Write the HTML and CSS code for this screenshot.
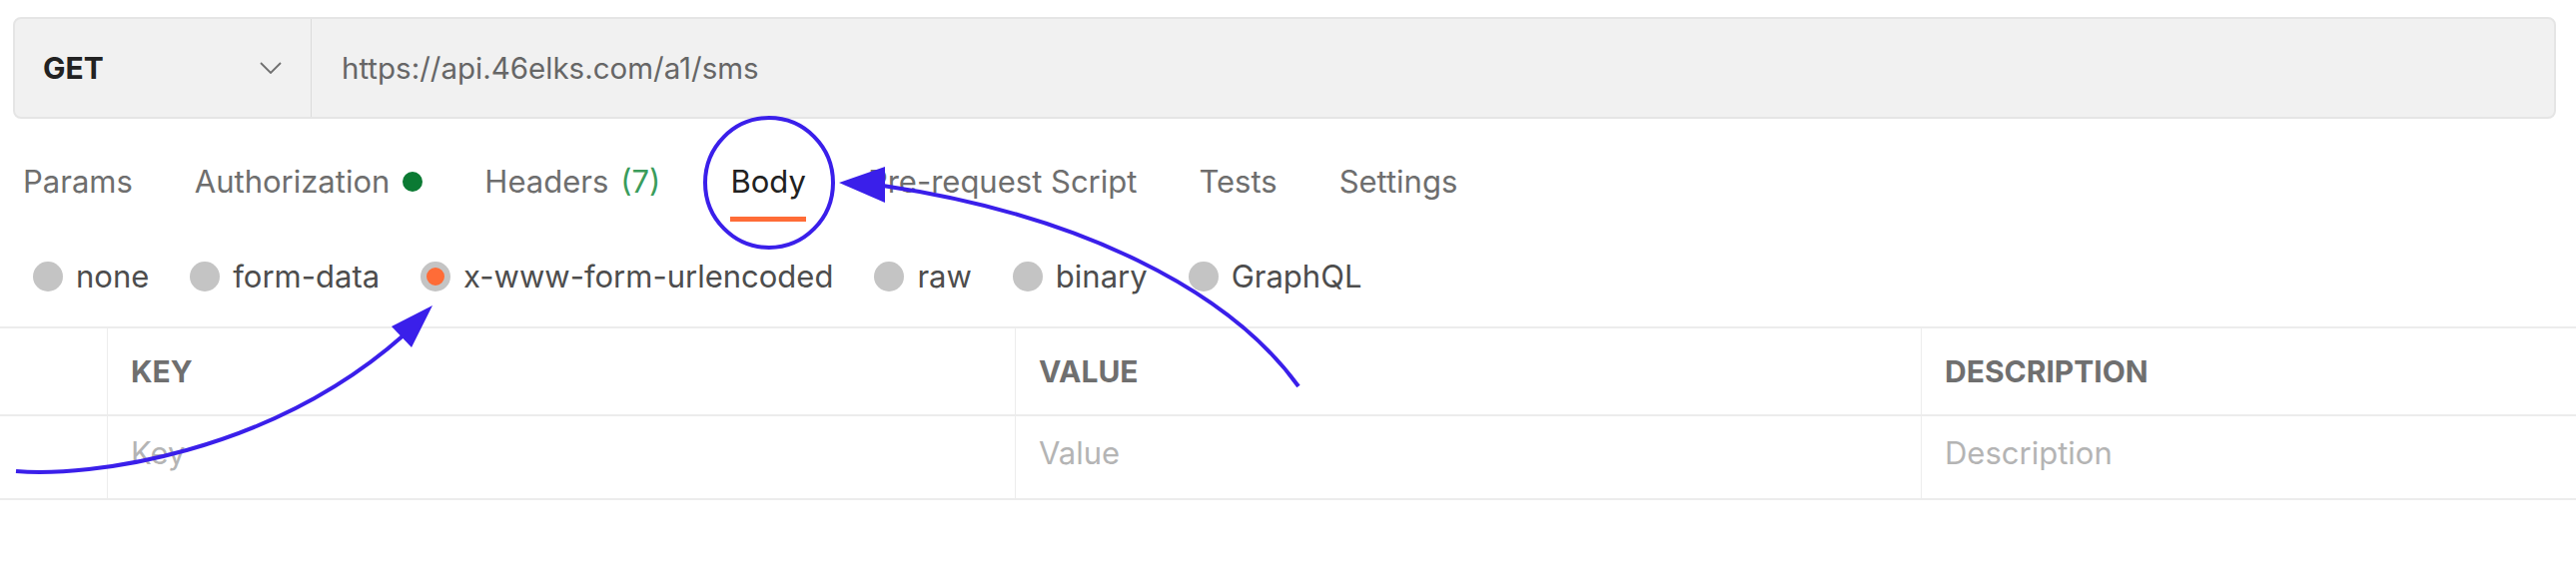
FILE: index.html
```html
<!DOCTYPE html>
<html lang="en">
<head>
<meta charset="utf-8">
<title>Request</title>
<link rel="stylesheet" href="styles.css">
</head>
<body>
  <div class="urlbar">
    <div class="method">
      <span class="method-name">GET</span>
      <svg class="chevron" viewBox="0 0 22 12" width="22" height="12"><polyline points="1,1 11,11 21,1" fill="none" stroke="#6f6f6f" stroke-width="1.8"/></svg>
    </div>
    <div class="url">https://api.46elks.com/a1/sms</div>
  </div>

  <nav class="tabs">
    <div class="tab">Params</div>
    <div class="tab">Authorization<span class="dot"></span></div>
    <div class="tab">Headers<span class="count">(7)</span></div>
    <div class="tab active">Body</div>
    <div class="tab">Pre-request Script</div>
    <div class="tab">Tests</div>
    <div class="tab">Settings</div>
  </nav>

  <div class="radios">
    <div class="radio"><span class="radio-circle"></span>none</div>
    <div class="radio"><span class="radio-circle"></span>form-data</div>
    <div class="radio selected"><span class="radio-circle"></span>x-www-form-urlencoded</div>
    <div class="radio"><span class="radio-circle"></span>raw</div>
    <div class="radio"><span class="radio-circle"></span>binary</div>
    <div class="radio"><span class="radio-circle"></span>GraphQL</div>
  </div>

  <div class="table">
    <div class="row head">
      <div class="cell"></div>
      <div class="cell th">KEY</div>
      <div class="cell th">VALUE</div>
      <div class="cell th">DESCRIPTION</div>
    </div>
    <div class="row body-row">
      <div class="cell"></div>
      <div class="cell placeholder">Key</div>
      <div class="cell placeholder">Value</div>
      <div class="cell placeholder">Description</div>
    </div>
  </div>

  <svg class="annot" width="2579" height="582" viewBox="0 0 2579 582">
    <ellipse cx="770" cy="183" rx="64" ry="65" fill="none" stroke="#3a1fea" stroke-width="4"/>
    <path d="M1300,387 C1230,290 1080,215 884,186" fill="none" stroke="#3a1fea" stroke-width="4"/>
    <polygon points="840,183 886,167 886,203" fill="#3a1fea"/>
    <path d="M16,472 C90,478 270,455 405,335" fill="none" stroke="#3a1fea" stroke-width="4"/>
    <polygon points="433,306 392,327 412,348" fill="#3a1fea"/>
  </svg>
</body>
</html>
```

FILE: styles.css
```css
* { box-sizing: border-box; }
html, body { margin: 0; padding: 0; background: #ffffff; }
body {
  font-family: Inter, "Noto Sans", sans-serif;
  width: 2579px;
  height: 582px;
  position: relative;
  overflow: hidden;
  color: #6b6b6b;
}
.urlbar {
  display: flex;
  margin: 17px 20px 0 13px;
  height: 102px;
  background: #f1f1f1;
  border: 2px solid #e5e5e5;
  border-radius: 8px;
}
.method {
  width: 297px;
  display: flex;
  align-items: center;
  justify-content: space-between;
  padding: 0 29px 0 28px;
  border-right: 1px solid #dcdcdc;
}
.method-name { font-weight: 700; font-size: 30px; color: #222222; }
.chevron { display: block; }
.url {
  display: flex;
  align-items: center;
  padding-left: 30px;
  font-size: 29.5px;
  color: #666666;
}
.tabs {
  display: flex;
  gap: 62px;
  margin-top: 43px;
  padding-left: 23px;
}
.tab {
  font-size: 31px;
  line-height: 40px;
  padding-bottom: 15px;
  border-bottom: 5px solid transparent;
  color: #6e6e6e;
  display: flex;
  align-items: center;
}
.tab.active { color: #212121; border-bottom-color: #ff6c37; }
.dot {
  width: 20px;
  height: 20px;
  border-radius: 50%;
  background: #0b7a33;
  margin-left: 13px;
}
.count { color: #3a9c5b; margin-left: 12px; margin-right: 8px; }
.radios {
  display: flex;
  gap: 41px;
  margin-top: 37px;
  padding-left: 33px;
}
.radio {
  display: flex;
  align-items: center;
  gap: 13px;
  font-size: 31px;
  line-height: 36px;
  color: #4d4d4d;
}
.radio-circle {
  width: 30px;
  height: 30px;
  border-radius: 50%;
  background: #c4c4c4;
}
.radio.selected .radio-circle {
  background: #ff6c37;
  border: 6px solid #c4c4c4;
}
.table {
  margin-top: 32px;
  border-top: 2px solid #ececec;
}
.row {
  display: grid;
  grid-template-columns: 107px 909px 907px 1fr;
  border-bottom: 2px solid #ececec;
}
.row.head { height: 88px; }
.row.body-row { height: 84px; }
.row.body-row .cell { padding-bottom: 10px; }
.cell {
  border-left: 1px solid #ededed;
  padding-left: 23px;
  display: flex;
  align-items: center;
}
.cell:first-child { border-left: none; }
.th { font-weight: 700; font-size: 30px; color: #6f6f6f; }
.placeholder { font-size: 31px; color: #b4b4b4; }
.annot { position: absolute; left: 0; top: 0; }
```
